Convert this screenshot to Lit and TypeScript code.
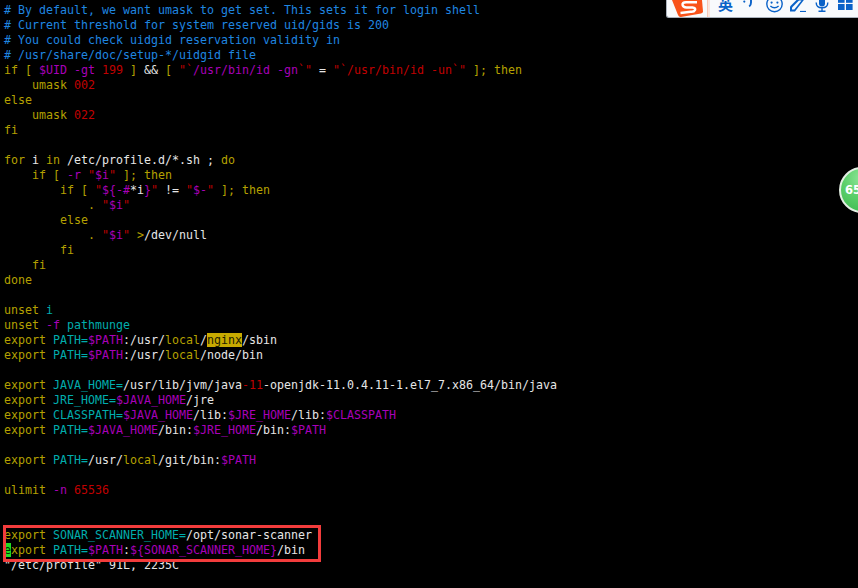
import { LitElement, html, css } from "lit";
import { customElement } from "lit/decorators.js";

// Each line is written with markers: «c|text» where c is a colour class. Unmarked text is the default white.
const LINES: string[] = [
  "«b|# By default, we want umask to get set. This sets it for login shell»",
  "«b|# Current threshold for system reserved uid/gids is 200»",
  "«b|# You could check uidgid reservation validity in»",
  "«b|# /usr/share/doc/setup-*/uidgid file»",
  "«y|if [ »«p|$UID»«y| »«p|-gt»«y| »«r|199»«y| ] »&&«y| [ »«r|\"`»«p|/usr/bin/id -gn»«r|`\"» = «r|\"`/usr/bin/id -un`\"»«y| ]; then»",
  "    «y|umask »«r|002»",
  "«y|else»",
  "    «y|umask »«r|022»",
  "«y|fi»",
  "",
  "«y|for» i «y|in» /etc/profile.d/*.sh ; «y|do»",
  "    «y|if [ »«p|-r» «r|\"»«p|$i»«r|\"» «y|]; then»",
  "        «y|if [ »«r|\"»«p|${-#»*i«p|}»«r|\"» != «r|\"»«p|$-»«r|\"» «y|]; then»",
  "            «y|.» «r|\"»«p|$i»«r|\"»",
  "        «y|else»",
  "            «y|.» «r|\"»«p|$i»«r|\"» «y|>»/dev/null",
  "        «y|fi»",
  "    «y|fi»",
  "«y|done»",
  "",
  "«y|unset »«c|i»",
  "«y|unset »«p|-f» «c|pathmunge»",
  "«y|export »«c|PATH=»«p|$PATH»:/usr/«y|local»/«h|nginx»/sbin",
  "«y|export »«c|PATH=»«p|$PATH»:/usr/«y|local»/node/bin",
  "",
  "«y|export »«c|JAVA_HOME=»/usr/lib/jvm/java«r|-11»-openjdk-11.0.4.11-1.el7_7.x86_64/bin/java",
  "«y|export »«c|JRE_HOME=»«p|$JAVA_HOME»/jre",
  "«y|export »«c|CLASSPATH=»«p|$JAVA_HOME»/lib:«p|$JRE_HOME»/lib:«p|$CLASSPATH»",
  "«y|export »«c|PATH=»«p|$JAVA_HOME»/bin:«p|$JRE_HOME»/bin:«p|$PATH»",
  "",
  "«y|export »«c|PATH=»/usr/«y|local»/git/bin:«p|$PATH»",
  "",
  "«y|ulimit »«p|-n» «r|65536»",
  "",
  "",
  "«y|export »«c|SONAR_SCANNER_HOME=»/opt/sonar-scanner",
  "«k|e»«y|xport »«c|PATH=»«p|$PATH»:«p|${SONAR_SCANNER_HOME}»/bin",
  "\"/etc/profile\" 91L, 2235C",
];

function renderLine(src: string) {
  const parts = src.split(/(«[a-z]\|[^»]*»)/).filter((s) => s.length > 0);
  return parts.map((p) => {
    const m = p.match(/^«([a-z])\|([^»]*)»$/);
    return m ? html`<span class=${m[1]}>${m[2]}</span>` : p;
  });
}

@customElement("app-root")
export class AppRoot extends LitElement {
  static styles = css`
    :host {
      display: block;
      position: relative;
      width: 858px;
      height: 588px;
      overflow: hidden;
      background: #000;
    }
    .term {
      padding: 3px 0 0 4px;
      font-family: "DejaVu Sans Mono", monospace;
      font-size: 11.63px;
      color: #e6e6e6;
    }
    .line {
      height: 15px;
      line-height: 15px;
      white-space: pre;
    }
    .b { color: #1f86e0; }
    .y { color: #b5a000; }
    .r { color: #c00000; }
    .p { color: #a800b8; }
    .c { color: #00adad; }
    .h { background: #c8aa00; color: #1c1c00; }
    .k { background: #22dd22; color: #003000; }

    .mark {
      position: absolute;
      left: 3px;
      top: 525px;
      width: 312px;
      height: 31px;
      border: 3px solid #f23c3c;
    }

    .ime {
      position: absolute;
      left: 666px;
      top: 0;
      width: 192px;
      height: 18px;
      box-sizing: border-box;
      background: #f8fafc;
      border: 1px solid #aab2bc;
      border-width: 0 0 1px 1px;
      border-radius: 0 0 0 3px;
      display: flex;
      align-items: flex-start;
    }
    .logo {
      width: 40px;
      height: 100%;
      flex: none;
      border-right: 1px solid #f8c8b6;
      box-shadow: 2px 0 0 #fbe6de;
    }
    .logo svg { display: block; }
    .tools {
      display: flex;
      align-items: flex-start;
      height: 100%;
      color: #0a62c8;
    }
    .ying {
      font-family: "Noto Sans CJK SC", sans-serif;
      font-size: 15px;
      font-weight: 700;
      line-height: 15px;
      width: 15px;
      margin: -4px 0 0 10px;
    }
    .tools svg { flex: none; display: block; }
    .s1 { margin-left: 10px; }
    .s2 { margin-left: 13px; }
    .s3 { margin-left: 7px; }
    .s4 { margin-left: 9px; }
    .s5 { margin-left: 9px; }

    .ball {
      position: absolute;
      left: 839px;
      top: 167px;
      width: 46px;
      height: 46px;
      box-sizing: border-box;
      border-radius: 50%;
      border: 2px solid #e4efe4;
      background: radial-gradient(circle at 50% 22%, #8fe59a 0%, #5ed16c 45%, #3cb84e 100%);
      display: flex;
      align-items: center;
      padding-left: 4px;
      font-family: "DejaVu Sans", sans-serif;
      font-weight: 700;
      font-size: 11.5px;
      color: #fff;
    }
  `;

  render() {
    return html`
      <div class="term">
        ${LINES.map((l) => html`<div class="line">${renderLine(l)}</div>`)}
      </div>
      <div class="mark"></div>
      <div class="ime">
        <div class="logo">
          <svg width="40" height="17" viewBox="0 0 40 17">
            <path d="M5 0H35L36 11.5Q36 13 34 13.5L14 17Q12 17.2 11 15Z" fill="#f9531a" />
            <path d="M30 2.2H19Q15 2.4 15.6 5T20 7.4H25.5Q29 7.8 28 10T23.5 11.8L13.5 13" fill="none" stroke="#fff" stroke-width="2.5" />
          </svg>
        </div>
        <div class="tools">
          <span class="ying">英</span>
          <svg class="s1" width="10" height="9" viewBox="0 0 10 9">
            <circle cx="1.3" cy="1.6" r="1.1" fill="#0a62c8" />
            <path d="M8 0v2.6q0 2.6-1.8 4" fill="none" stroke="#0a62c8" stroke-width="1.9" />
          </svg>
          <svg class="s2" width="17" height="13" viewBox="0 0 17 13">
            <circle cx="8.5" cy="4" r="7.7" fill="none" stroke="#0a62c8" stroke-width="1.4" />
            <circle cx="5.6" cy="2.6" r="1.1" fill="#0a62c8" />
            <circle cx="11.4" cy="2.6" r="1.1" fill="#0a62c8" />
            <path d="M4.4 6q4.1 3.6 8.2 0" fill="none" stroke="#0a62c8" stroke-width="1.4" />
          </svg>
          <svg class="s3" width="16" height="12" viewBox="0 0 16 12">
            <path d="M0 11.5V6.5L8-1.5H15L5 11.5Z" fill="#0a62c8" />
            <path d="M2 9.5V7.4L9 .4H11.5L4.3 9.5Z" fill="#f8fafc" />
            <path d="M10 11.5H16" stroke="#0a62c8" stroke-width="1.2" />
          </svg>
          <svg class="s4" width="14" height="12" viewBox="0 0 14 12">
            <rect x="4" y="-4" width="6" height="10.5" rx="3" fill="#0a62c8" />
            <path d="M1.2 2.5q0 5.3 5.8 5.3t5.8-5.3M7 8v3M3.5 11.3h7" fill="none" stroke="#0a62c8" stroke-width="1.4" />
          </svg>
          <svg class="s5" width="15" height="11" viewBox="0 0 15 11">
            <rect x="0" y="0" width="6.6" height="2.8" fill="#0a62c8" />
            <rect x="8" y="0" width="6.6" height="2.8" fill="#0a62c8" />
            <rect x="0" y="4" width="6.6" height="6" fill="#0a62c8" />
            <rect x="8" y="4" width="6.6" height="6" fill="#0a62c8" />
          </svg>
        </div>
      </div>
      <div class="ball">65</div>
    `;
  }
}
